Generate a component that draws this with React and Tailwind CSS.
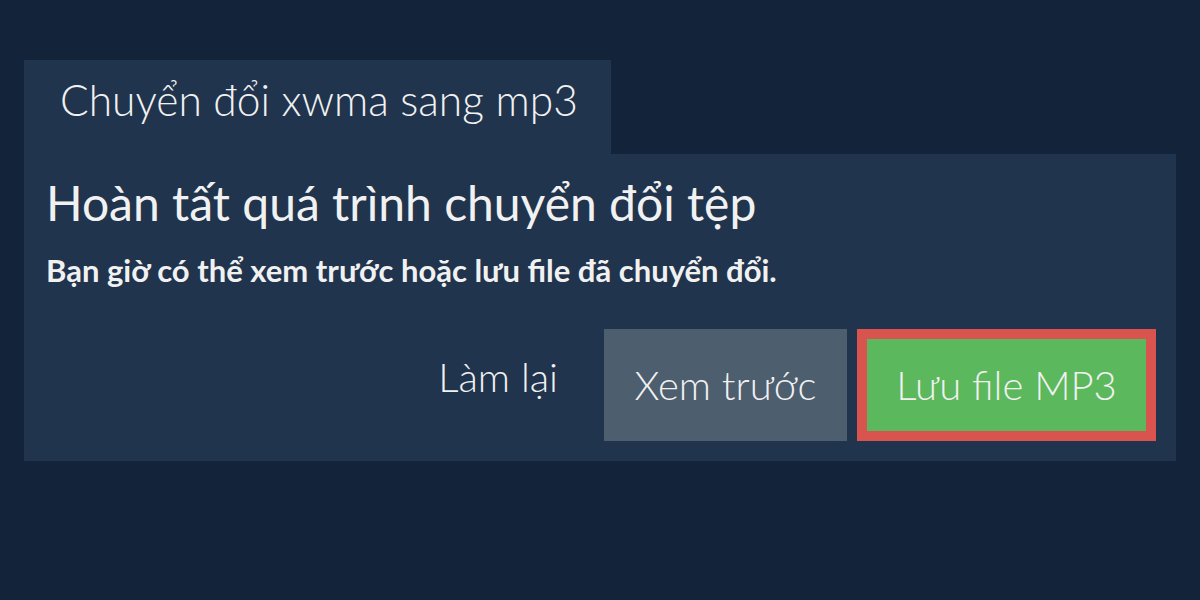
import React from 'react';

export default function App() {
  return (
    <div className="w-[1200px] h-[600px] bg-[#12233a] px-6 pt-[60px] text-[#f1f1f1]" style={{ fontFamily: 'Lato, "Noto Sans", sans-serif' }}>
      <div className="w-[587px] h-[94px] bg-[#20344d] pl-9 pt-[14px]">
        <span className="text-[42.5px] font-light leading-[52px]">Chuyển đổi xwma sang mp3</span>
      </div>
      <div className="bg-[#20344d] pl-[22px] pr-5 pt-5 pb-5">
        <h1 className="text-[48px] leading-[58px] font-normal">Hoàn tất quá trình chuyển đổi tệp</h1>
        <p className="mt-5 text-[31px] leading-[36px] font-bold">Bạn giờ có thể xem trước hoặc lưu file đã chuyển đổi.</p>
        <div className="mt-[41px] flex items-center justify-end gap-[10px]">
          <button className="mr-[36px] mb-[17px] text-[40px] font-light leading-none">Làm lại</button>
          <button className="w-[243px] h-[112px] bg-[#4d5e6f] text-[40px] font-light">Xem trước</button>
          <button className="w-[299px] h-[112px] bg-[#5cb85c] border-[10px] border-[#d9534f] text-[40px] font-light">Lưu file MP3</button>
        </div>
      </div>
    </div>
  );
}
